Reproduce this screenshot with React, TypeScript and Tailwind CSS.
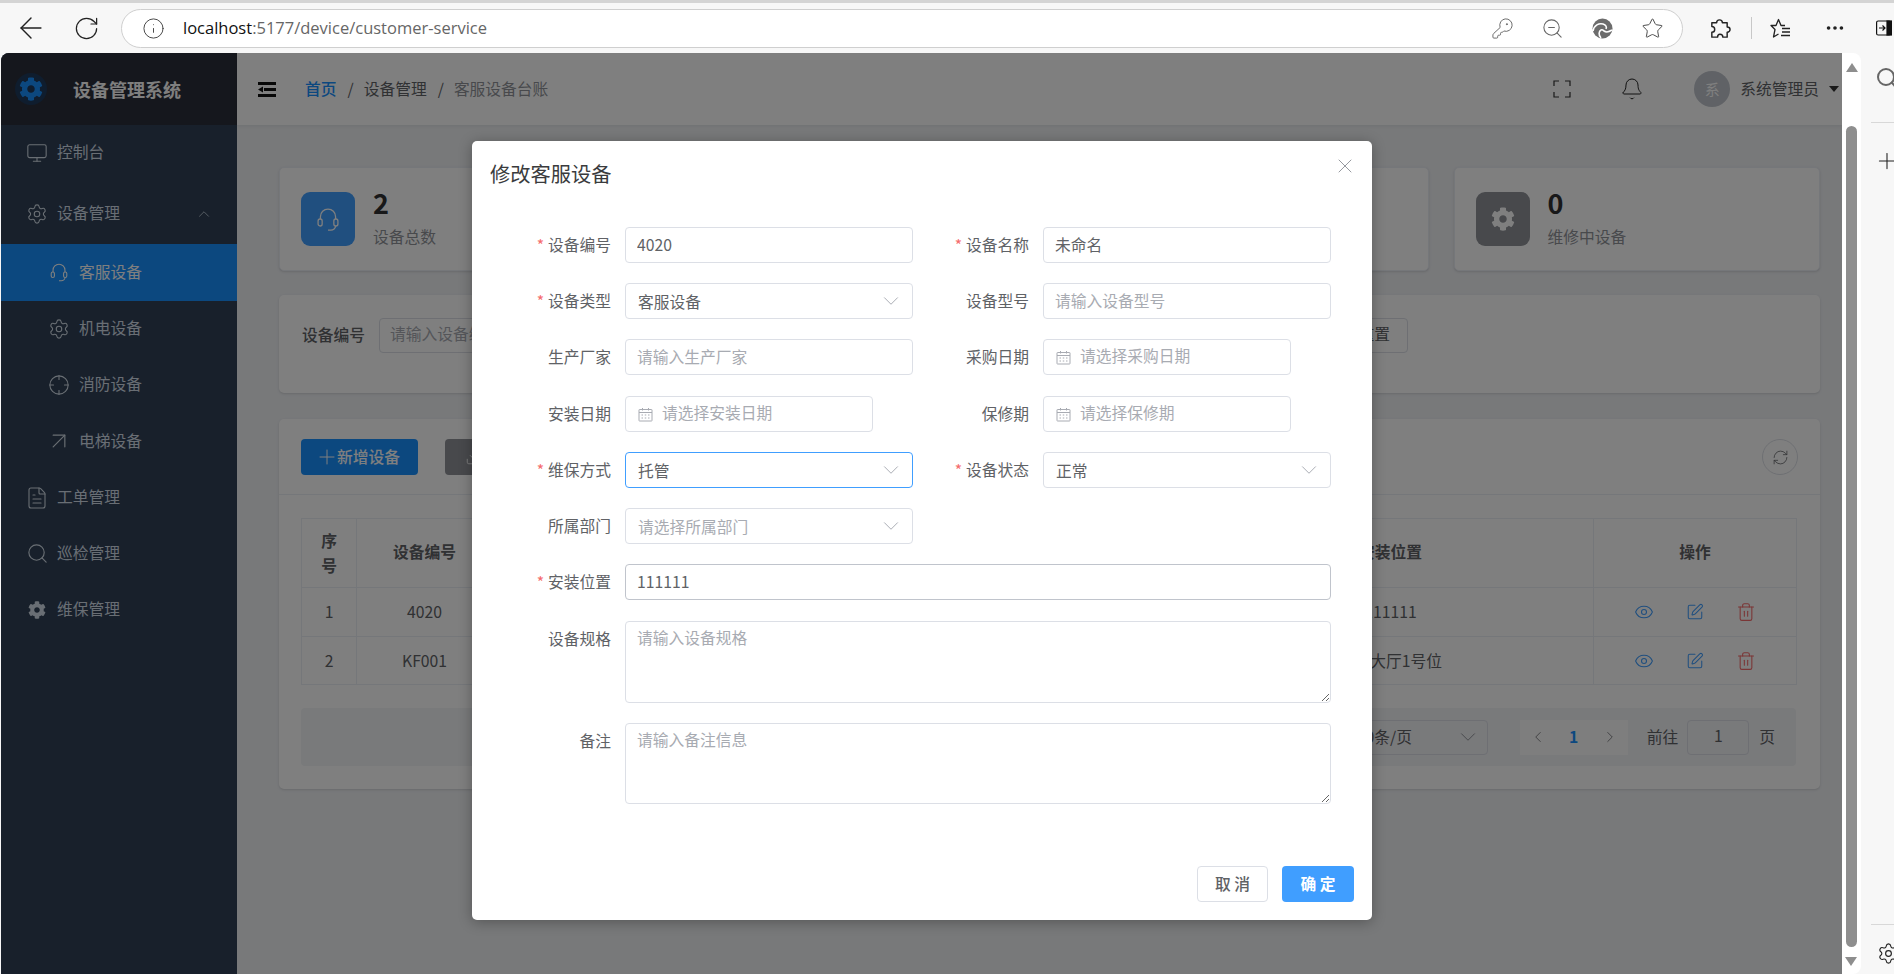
import React from "react";
import {
  ArrowLeft,
  ArrowUpRight,
  Bell,
  ChevronDown,
  ChevronLeft,
  ChevronRight,
  ChevronUp,
  Crosshair,
  Download,
  Ellipsis,
  Eye,
  FileText,
  Info,
  KeyRound,
  Monitor,
  Plus,
  RotateCw,
  RefreshCw,
  Search,
  Settings,
  SquarePen,
  Star,
  Trash2,
  X,
  ZoomOut,
} from "lucide-react";
import { FaCog } from "react-icons/fa";

const CalendarIcon = () => (
  <svg width="15" height="15" viewBox="0 0 15 15" fill="none" stroke="#a8abb2" strokeWidth="1" className="shrink-0">
    <rect x="1" y="2.5" width="13" height="11.5" rx="0.5" />
    <path d="M1 5.5h13M4.5 1v2.500M10.500 1v2.500" />
    <path d="M3.500 8h1.500M6.750 8h1.500M10 8h1.500M3.500 11h1.500M6.750 11h1.500M10 11h1.500" />
  </svg>
);

const HeadsetIcon = ({ size, width = 1.2 }: { size: number; width?: number }) => (
  <svg width={size} height={size} viewBox="0 0 24 24" fill="none" stroke="currentColor" strokeWidth={width} className="shrink-0">
    <path d="M5.500 12V10a6.500 6.500 0 0 1 13 0v2" />
    <rect x="3.500" y="12" width="3.500" height="6" rx="1.700" />
    <rect x="17" y="12" width="3.500" height="6" rx="1.700" />
    <path d="M18.500 18c0 2-2 3.500-4 3.500h-2.500" />
  </svg>
);

const EdgeLogo = () => (
  <svg width="21" height="21" viewBox="0 0 21 21">
    <circle cx="10.500" cy="10.500" r="10" fill="#6c6c6c" />
    <path d="M1 13C2 7 7 5 11 6c3 1 4 3 3 5" fill="none" stroke="#fff" strokeWidth="1.600" />
    <path d="M9 20c-3-3-2-7 0-8 1-.5 2 0 3 1 2 1.500 5 1 8-1" fill="none" stroke="#fff" strokeWidth="1.600" />
  </svg>
);

const PuzzleIcon = () => (
  <svg width="23" height="23" viewBox="0 0 24 24" fill="none" stroke="#222" strokeWidth="1.500" strokeLinejoin="round" className="ml-[25px]">
    <path d="M9 6c0-2 1.500-3 3-3s3 1 3 3h5v4.500c2 0 3 1.500 3 2.500s-1 3-3 3V21h-4.500c0-2-1-3-3-3s-2.500 1-2.500 3H4v-5c2 0 3-1 3-3S6 10 4 10V6z" />
  </svg>
);

const FavoritesIcon = () => (
  <svg width="21" height="21" viewBox="0 0 21 21" fill="none" stroke="#222" strokeWidth="1.300" strokeLinejoin="round" className="ml-[18px]">
    <path d="M15 7.500h-4L8.500 1.500 6 7.500H1l4 4L3.500 19l5-3" />
    <path d="M12 10.500h8M12 14h8M11 17.500h9" />
  </svg>
);

const PanelIcon = () => (
  <svg width="16" height="16" viewBox="0 0 16 16" fill="none" stroke="#111" strokeWidth="1.200" className="ml-[30px]">
    <rect x="0.600" y="1" width="14" height="14" rx="1.500" />
    <rect x="11" y="1" width="5" height="14" fill="#111" />
    <path d="M3 8h6M6.500 5.500 9 8l-2.500 2.500" />
  </svg>
);

const BrowserBar = () => (
  <div className="h-[53px] shrink-0 bg-[#f7f7f7] border-t-[3px] border-[#d4d4d4] flex items-center relative overflow-hidden">
    <ArrowLeft size={34} strokeWidth={1} className="ml-[14px] text-[#222] shrink-0" />
    <RotateCw size={27} strokeWidth={1.1} className="ml-[24.5px] text-[#222] shrink-0" />
    <div className="ml-[21.5px] w-[1562px] shrink-0 h-[39px] rounded-full border border-[#cfcfcf] bg-white flex items-center">
      <Info size={23} strokeWidth={1} className="ml-[19.5px] text-[#444]" />
      <div className="ml-[18.5px] text-[16.5px] font-['Open_Sans',sans-serif] text-[#666]">
        <span className="text-[#111]">localhost</span>:5177/device/customer-service
      </div>
      <div className="ml-auto flex items-center gap-[27px] pr-[18px] text-[#666]">
        <KeyRound size={23} strokeWidth={1} />
        <ZoomOut size={23} strokeWidth={1.1} />
        <span className="w-[23px] flex justify-center"><EdgeLogo /></span>
        <Star size={23} strokeWidth={1} className="text-[#444]" />
      </div>
    </div>
    <PuzzleIcon />
    <div className="ml-[19.5px] w-px h-[22px] bg-[#c8c8c8] shrink-0" />
    <FavoritesIcon />
    <Ellipsis size={22} className="ml-[33px] text-[#222] shrink-0" />
    <PanelIcon />
  </div>
);

const MenuRow = ({
  icon,
  label,
  sub,
  active,
}: {
  icon: React.ReactNode;
  label: string;
  sub?: boolean;
  active?: boolean;
}) => (
  <div
    className={`h-[56.3px] flex items-center text-[15.75px] ${sub ? "pl-[48px]" : "pl-[26px]"} ${
      active ? "bg-[#1890ff] text-white" : "text-[#d3dde8]"
    }`}
  >
    <span className="w-[20px] flex justify-center">{icon}</span>
    <span className="ml-[10px] pb-[2px]">{label}</span>
  </div>
);

const Sidebar = () => (
  <div className="ml-px w-[236px] shrink-0 bg-[#304156] rounded-tl-lg overflow-hidden">
    <div className="h-[72px] bg-[#2b2f3a] flex items-center">
      <div className="ml-[14px] w-[32px] h-[32px] rounded-full bg-[#1f3a5c] flex items-center justify-center">
        <FaCog size={24} className="text-[#1890ff]" />
      </div>
      <span className="ml-[26px] text-[18px] font-bold text-white">设备管理系统</span>
    </div>
    <MenuRow icon={<Monitor size={22} strokeWidth={1.2} className="shrink-0" />} label="控制台" />
    <div className="h-[60px] mt-[3px] pl-[26px] flex items-center text-[15.75px] text-[#d3dde8]">
      <span className="w-[20px] flex justify-center">
        <Settings size={22} strokeWidth={1.2} className="shrink-0" />
      </span>
      <span className="ml-[10px] pb-[2px]">设备管理</span>
      <ChevronUp size={18} strokeWidth={1} className="ml-[75px]" />
    </div>
    <MenuRow sub active icon={<HeadsetIcon size={22} />} label="客服设备" />
    <MenuRow sub icon={<Settings size={22} strokeWidth={1.2} className="shrink-0" />} label="机电设备" />
    <MenuRow sub icon={<Crosshair size={22} strokeWidth={1.2} className="shrink-0" />} label="消防设备" />
    <MenuRow sub icon={<ArrowUpRight size={28} strokeWidth={1} className="shrink-0" />} label="电梯设备" />
    <MenuRow icon={<FileText size={24} strokeWidth={1.1} className="shrink-0" />} label="工单管理" />
    <MenuRow icon={<Search size={23} strokeWidth={1.2} className="shrink-0" />} label="巡检管理" />
    <MenuRow icon={<FaCog size={18} />} label="维保管理" />
  </div>
);

const TopHeader = () => (
  <div className="h-[72px] shrink-0 bg-white shadow-[0_1px_4px_rgba(0,21,41,0.08)] flex items-center text-[15.75px]">
    <svg width="18" height="15" viewBox="0 0 18 15" fill="#111" className="ml-[21px]">
      <path d="M0 0h18v3H0zM6 6h12v3H6zM0 12h18v3H0zM5 4.500v6L0 7.500z" />
    </svg>
    <span className="ml-[29px] font-medium text-[#1890ff]">首页</span>
    <span className="ml-[11px] text-[#606266]">/</span>
    <span className="ml-[10px] text-[#606266]">设备管理</span>
    <span className="ml-[11px] text-[#606266]">/</span>
    <span className="ml-[10px] text-[#909399]">客服设备台账</span>
    <svg width="18" height="18" viewBox="0 0 18 18" fill="none" stroke="#333" strokeWidth="1.200" className="ml-auto">
      <path d="M1 6V1h5M12 1h5v5M17 12v5h-5M6 17H1v-5" />
    </svg>
    <Bell size={24} strokeWidth={1} className="ml-[49px] text-[#222]" />
    <div className="ml-[50px] w-[36px] h-[36px] rounded-full bg-[#c0c4cc] text-white flex items-center justify-center text-[15px]">
      系
    </div>
    <span className="ml-[10px] text-[#606266]">系统管理员</span>
    <div className="ml-[10px] mr-[3px] w-0 h-0 border-x-[5px] border-x-transparent border-t-[6px] border-t-[#333]" />
  </div>
);

const stats = [
  { value: "2", label: "设备总数", color: "bg-[#409eff]", icon: <HeadsetIcon size={28} width={1.1} /> },
  null,
  null,
  { value: "0", label: "维修中设备", color: "bg-[#909399]", icon: <FaCog size={24} /> },
];

const StatCards = () => (
  <div className="grid grid-cols-4 gap-x-[25px]">
    {stats.map((s, i) => (
      <div key={i} className="h-[104px] bg-white border border-[#ebeef5] rounded-[5px] shadow-sm flex items-center pl-[21px]">
        {s && (
          <>
            <div className={`w-[54px] h-[54px] rounded-[9px] text-white flex items-center justify-center ${s.color}`}>
              {s.icon}
            </div>
            <div className="ml-[18px]">
              <div className="text-[27px] leading-[28px] font-bold text-[#303133]">{s.value}</div>
              <div className="mt-[8px] text-[15.75px] leading-[24px] text-[#909399]">{s.label}</div>
            </div>
          </>
        )}
      </div>
    ))}
  </div>
);

const SearchCard = () => (
  <div className="mt-[24px] h-[98px] bg-white rounded-[5px] shadow-sm pt-[23px] pl-[23px] flex items-start text-[15.75px]">
    <span className="w-[77px] h-[35px] leading-[34px] font-medium text-[#606266]">设备编号</span>
    <div className="w-[225px] h-[35px] border border-[#dcdfe6] rounded-[4px] pl-[10px] leading-[30px] text-[#a8abb2]">
      请输入设备编号
    </div>
    <div className="ml-[732px] w-[72px] h-[35px] border border-[#dcdfe6] rounded-[4px] flex items-center justify-end pr-[17px] pb-[3px] text-[#606266]">
      重置
    </div>
  </div>
);

const Th = ({ children, multi }: { children?: React.ReactNode; multi?: boolean }) => (
  <th
    className={`border border-[#ebeef5] font-bold text-[#606266] text-[15.75px] leading-[25px] px-[16px] ${
      multi ? "" : "pb-[3px]"
    }`}
  >
    {children}
  </th>
);
const Td = ({ children }: { children?: React.ReactNode }) => (
  <td className="border border-[#ebeef5] text-center text-[#606266] text-[15.75px]">{children}</td>
);

const actionIcons = (
  <div className="flex items-center justify-center gap-[32px]">
    <Eye size={20} strokeWidth={1.3} className="text-[#409eff]" />
    <SquarePen size={18} strokeWidth={1.4} className="text-[#409eff]" />
    <Trash2 size={20} strokeWidth={1.3} className="text-[#f56c6c]" />
  </div>
);

const TableCard = () => (
  <div className="mt-[26px] h-[370px] bg-white rounded-[5px] shadow-sm">
    <div className="h-[76px] border-b border-[#ebeef5] px-[22px] pt-[20px] flex items-start justify-between">
      <div className="flex gap-[27px]">
        <div className="w-[117px] h-[36px] rounded-[4px] bg-[#1890ff] text-white text-[15.75px] font-medium flex items-center justify-center">
          <Plus size={24} strokeWidth={1} className="-mr-[2px] -ml-[4px]" />
          新增设备
        </div>
        <div className="w-[117px] h-[36px] rounded-[4px] bg-[#909399] text-white pl-[20px] flex items-center">
          <Download size={18} strokeWidth={1.2} />
        </div>
      </div>
      <div className="w-[36px] h-[36px] rounded-full border border-[#dcdfe6] flex items-center justify-center text-[#606266]">
        <RefreshCw size={17} strokeWidth={1.1} />
      </div>
    </div>
    <div className="px-[22px] pt-[23px]">
      <table className="w-[1495px] table-fixed border-collapse">
        <colgroup>
          <col className="w-[55px]" />
          <col className="w-[136px]" />
          <col className="w-[695px]" />
          <col className="w-[406px]" />
          <col className="w-[203px]" />
        </colgroup>
        <thead>
          <tr className="h-[69px]">
            <Th multi>序号</Th>
            <Th>设备编号</Th>
            <Th />
            <Th>安装位置</Th>
            <Th>操作</Th>
          </tr>
        </thead>
        <tbody>
          <tr className="h-[49px]">
            <Td>1</Td>
            <Td>4020</Td>
            <Td />
            <Td>111111</Td>
            <Td>{actionIcons}</Td>
          </tr>
          <tr className="h-[48px]">
            <Td>2</Td>
            <Td>KF001</Td>
            <Td />
            <Td>客服大厅1号位</Td>
            <Td>{actionIcons}</Td>
          </tr>
        </tbody>
      </table>
      <div className="mt-[23px] h-[58px] w-[1495px] bg-[#f3f4f7] rounded-[4px] flex items-center justify-end pr-[21px] text-[15.75px] text-[#606266]">
        <div className="w-[150px] h-[35px] border border-[#dcdfe6] rounded-[4px] flex items-center justify-between pl-[18px] pr-[6px]">
          <span>10条/页</span>
          <ChevronDown size={26} strokeWidth={0.9} className="text-[#909399]" />
        </div>
        <div className="ml-[32px] w-[108px] h-[35px] bg-[#fcfcfc] flex items-center justify-between px-[9px]">
          <ChevronLeft size={18} strokeWidth={1} />
          <span className="font-bold text-[#1890ff]">1</span>
          <ChevronRight size={18} strokeWidth={1} />
        </div>
        <span className="ml-[19px]">前往</span>
        <div className="ml-[9px] w-[62px] h-[35px] border border-[#dcdfe6] rounded-[4px] flex items-center justify-center pb-[3px]">1</div>
        <span className="ml-[10px]">页</span>
      </div>
    </div>
  </div>
);

const Field = ({
  label,
  required,
  span,
  children,
}: {
  label: string;
  required?: boolean;
  span?: boolean;
  children: React.ReactNode;
}) => (
  <div className={`flex ${span ? "col-span-2" : ""}`}>
    <label className="w-[113px] pr-[14px] h-[36px] leading-[36px] text-right text-[15.75px] text-[#606266] shrink-0">
      {required && <span className="text-[#f56c6c] mr-[4px]">*</span>}
      {label}
    </label>
    {children}
  </div>
);

const TextInput = ({ value, placeholder, hover }: { value?: string; placeholder?: string; hover?: boolean }) => (
  <input
    readOnly
    value={value ?? ""}
    placeholder={placeholder}
    className={`w-full h-[36px] pl-[11px] pr-3 pb-[2px] rounded-[4px] border bg-white text-[15.75px] text-[#606266] placeholder:text-[#a8abb2] outline-none ${
      hover ? "border-[#c0c4cc]" : "border-[#dcdfe6]"
    }`}
  />
);

const SelectBox = ({ value, placeholder, focused }: { value?: string; placeholder?: string; focused?: boolean }) => (
  <div
    className={`w-full h-[36px] pl-3 pr-[8px] rounded-[4px] border flex items-center justify-between text-[15.75px] ${
      focused ? "border-[#409eff]" : "border-[#dcdfe6]"
    }`}
  >
    <span className={`pt-px ${value ? "text-[#606266]" : "text-[#a8abb2]"}`}>{value ?? placeholder}</span>
    <ChevronDown size={26} strokeWidth={0.9} className="text-[#a8abb2]" />
  </div>
);

const DateBox = ({ placeholder }: { placeholder: string }) => (
  <div className="w-[247.5px] h-[36px] pl-3 rounded-[4px] border border-[#dcdfe6] flex items-center gap-[9px]">
    <CalendarIcon />
    <input readOnly placeholder={placeholder} className="w-[180px] pb-[2px] text-[15.75px] placeholder:text-[#a8abb2] outline-none" />
  </div>
);

const AreaInput = ({ placeholder, height }: { placeholder: string; height: string }) => (
  <textarea
    readOnly
    placeholder={placeholder}
    className={`w-full ${height} pl-[11px] pr-3 pt-[4px] rounded-[4px] border border-[#dcdfe6] text-[15.75px] leading-[24px] placeholder:text-[#a8abb2] outline-none resize-y`}
  />
);

const EditDialog = () => (
  <div className="absolute left-[472px] top-[88px] w-[900px] h-[779px] bg-white rounded-[5px] shadow-[0_2px_14px_rgba(0,0,0,0.3)]">
    <div className="h-[86px] pl-[18px] pt-[21px] text-[20.25px] leading-[24px] text-[#3a3b3d]">修改客服设备</div>
    <X size={24} strokeWidth={0.9} className="absolute right-[15px] top-[13px] text-[#8a8d94]" />
    <div className="pl-[40px] grid grid-cols-[401px_401px] gap-x-[17px] gap-y-5">
      <Field label="设备编号" required><TextInput value="4020" /></Field>
      <Field label="设备名称" required><TextInput value="未命名" /></Field>
      <Field label="设备类型" required><SelectBox value="客服设备" /></Field>
      <Field label="设备型号"><TextInput placeholder="请输入设备型号" /></Field>
      <Field label="生产厂家"><TextInput placeholder="请输入生产厂家" /></Field>
      <Field label="采购日期"><DateBox placeholder="请选择采购日期" /></Field>
      <div className="col-span-2 grid grid-cols-[401px_401px] gap-x-[17px] mt-px">
        <Field label="安装日期"><DateBox placeholder="请选择安装日期" /></Field>
        <Field label="保修期"><DateBox placeholder="请选择保修期" /></Field>
      </div>
      <Field label="维保方式" required><SelectBox value="托管" focused /></Field>
      <Field label="设备状态" required><SelectBox value="正常" /></Field>
      <Field label="所属部门"><SelectBox placeholder="请选择所属部门" /></Field>
      <div />
      <Field label="安装位置" required span><TextInput value="111111" hover /></Field>
      <div className="col-span-2 mt-px">
        <Field label="设备规格" span><AreaInput placeholder="请输入设备规格" height="h-[82px]" /></Field>
      </div>
      <Field label="备注" span><AreaInput placeholder="请输入备注信息" height="h-[81px]" /></Field>
    </div>
    <div className="mt-[62px] pr-[18px] flex justify-end gap-[14px] text-[15.75px]">
      <div className="w-[71px] h-[36px] pb-px rounded-[4px] border border-[#dcdfe6] text-[#606266] font-medium flex items-center justify-center">
        取 消
      </div>
      <div className="w-[72px] h-[36px] pb-px rounded-[4px] bg-[#409eff] text-white font-bold flex items-center justify-center">
        确 定
      </div>
    </div>
  </div>
);

const PageScrollbar = () => (
  <div className="w-[19px] shrink-0 bg-white rounded-r-lg relative">
    <div className="mx-auto mt-[10px] w-0 h-0 border-x-[6px] border-x-transparent border-b-[9px] border-b-[#8e8e8e]" />
    <div className="absolute left-[4px] top-[73px] w-[11px] h-[821px] rounded-full bg-[#8e8e8e]" />
    <div className="absolute left-[3px] bottom-[8px] w-0 h-0 border-x-[6px] border-x-transparent border-t-[9px] border-t-[#8e8e8e]" />
  </div>
);

const EdgeSidePanel = () => (
  <div className="flex-1 bg-[#f7f7f7] relative overflow-hidden">
    <Search size={24} strokeWidth={2} className="absolute left-[14px] top-[13px] text-[#666]" />
    <div className="absolute left-[10px] right-0 top-[69px] h-px bg-[#d8d8d8]" />
    <Plus size={26} strokeWidth={1} className="absolute left-[13px] top-[95px] text-[#222]" />
    <div className="absolute left-[10px] right-0 top-[871px] h-px bg-[#d8d8d8]" />
    <Settings size={23} strokeWidth={1.2} className="absolute left-[16px] top-[889px] text-[#222]" />
  </div>
);

export default function App() {
  return (
    <div className="w-[1894px] h-[974px] overflow-hidden bg-[#f7f7f7] flex flex-col font-['Noto_Sans_CJK_SC','Noto_Sans',sans-serif]">
      <BrowserBar />
      <div className="flex-1 flex min-h-0">
        <div className="relative w-[1842px] shrink-0 flex overflow-hidden">
          <Sidebar />
          <div className="flex-1 flex flex-col bg-[#f0f2f5]">
            <TopHeader />
            <div className="pl-[42px] pr-[22px] pt-[42px]">
              <StatCards />
              <SearchCard />
              <TableCard />
            </div>
          </div>
          <div className="absolute inset-y-0 left-px right-0 bg-black/50 rounded-tl-lg" />
          <EditDialog />
        </div>
        <PageScrollbar />
        <EdgeSidePanel />
      </div>
    </div>
  );
}
